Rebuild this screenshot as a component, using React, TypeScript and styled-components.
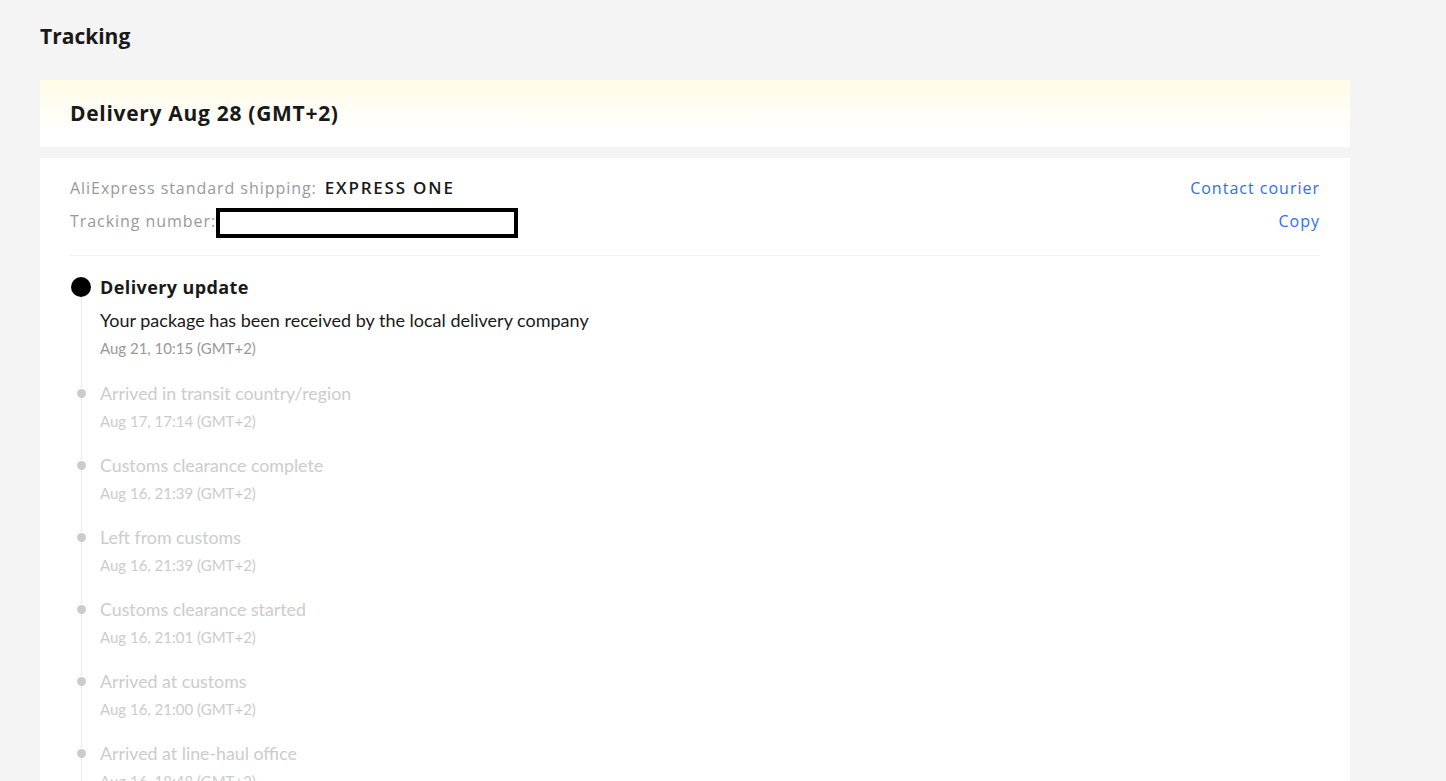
import { createGlobalStyle, styled } from "styled-components";

type TrackEvent = {
  title: string;
  detail?: string;
  time: string;
};

const events: TrackEvent[] = [
  {
    title: "Delivery update",
    detail: "Your package has been received by the local delivery company",
    time: "Aug 21, 10:15 (GMT+2)",
  },
  { title: "Arrived in transit country/region", time: "Aug 17, 17:14 (GMT+2)" },
  { title: "Customs clearance complete", time: "Aug 16, 21:39 (GMT+2)" },
  { title: "Left from customs", time: "Aug 16, 21:39 (GMT+2)" },
  { title: "Customs clearance started", time: "Aug 16, 21:01 (GMT+2)" },
  { title: "Arrived at customs", time: "Aug 16, 21:00 (GMT+2)" },
  { title: "Arrived at line-haul office", time: "Aug 16, 18:48 (GMT+2)" },
  { title: "Left from departure country/region", time: "Aug 16, 14:22 (GMT+2)" },
];

export default function App() {
  return (
    <>
      <GlobalStyle />
      <Page>
        <PageTitle>Tracking</PageTitle>
        <EtaCard>
          <EtaText>Delivery Aug 28 (GMT+2)</EtaText>
        </EtaCard>
        <DetailCard>
          <InfoRow>
            <InfoLabel>
              AliExpress standard shipping: <Carrier>EXPRESS ONE</Carrier>
            </InfoLabel>
            <LinkText>Contact courier</LinkText>
          </InfoRow>
          <InfoRow>
            <InfoLabel>
              Tracking number:
              <Redacted />
            </InfoLabel>
            <LinkText>Copy</LinkText>
          </InfoRow>
          <Divider />
          <Timeline>
            {events.map((ev, i) => (
              <Step key={i} $active={i === 0}>
                <Dot $active={i === 0} />
                <StepTitle $active={i === 0}>{ev.title}</StepTitle>
                {ev.detail && <StepDetail>{ev.detail}</StepDetail>}
                <StepTime $active={i === 0}>{ev.time}</StepTime>
              </Step>
            ))}
          </Timeline>
        </DetailCard>
      </Page>
    </>
  );
}

const GlobalStyle = createGlobalStyle`
  html, body {
    margin: 0;
    padding: 0;
    background: #f4f4f4;
    font-family: "Open Sans", Arial, sans-serif;
    overflow: hidden;
  }
`;

const Page = styled.div`
  width: 1310px;
  padding: 22px 0 0 40px;
`;

const PageTitle = styled.h1`
  margin: 0 0 30px;
  height: 28px;
  line-height: 28px;
  font-size: 21px;
  font-weight: 700;
  color: #191919;
`;

const EtaCard = styled.div`
  height: 67px;
  display: flex;
  align-items: center;
  padding: 0 30px;
  background: linear-gradient(180deg, #fffbe5 0%, #ffffff 75%);
  margin-bottom: 11px;
`;

const EtaText = styled.div`
  font-size: 21px;
  font-weight: 700;
  color: #191919;
  letter-spacing: 0.7px;
  margin-top: -2px;
`;

const DetailCard = styled.div`
  background: #fff;
  padding: 13px 30px 0;
  min-height: 700px;
`;

const InfoRow = styled.div`
  display: flex;
  justify-content: space-between;
  align-items: center;
  height: 33px;
`;

const InfoLabel = styled.div`
  display: flex;
  align-items: center;
  font-size: 16px;
  color: #999;
  letter-spacing: 0.95px;
`;

const Carrier = styled.span`
  margin-left: 8px;
  font-size: 17px;
  color: #191919;
  font-weight: 600;
  letter-spacing: 1.8px;
`;

const Redacted = styled.span`
  display: inline-block;
  width: 294px;
  height: 22px;
  border: 4px solid #000;
  background: #fff;
  margin-top: 4px;
`;

const LinkText = styled.span`
  font-size: 16px;
  color: #2e6ef2;
  letter-spacing: 1px;
  cursor: pointer;
`;

const Divider = styled.div`
  height: 1px;
  background: #f0f0f0;
  margin: 18px 0 18px;
`;

const Timeline = styled.div`
  display: flex;
  flex-direction: column;
  font-family: Lato, "Open Sans", sans-serif;
`;

const Step = styled.div<{ $active?: boolean }>`
  position: relative;
  padding: 0 0 ${(p) => (p.$active ? "22px" : "21px")} 30px;

  &::before {
    content: "";
    position: absolute;
    left: 11px;
    top: ${(p) => (p.$active ? "20px" : "16px")};
    bottom: -8px;
    width: 1px;
    background: #e8e8e8;
  }
`;

const Dot = styled.span<{ $active?: boolean }>`
  position: absolute;
  left: ${(p) => (p.$active ? "1px" : "7px")};
  top: ${(p) => (p.$active ? "3px" : "9px")};
  width: ${(p) => (p.$active ? "20px" : "9px")};
  height: ${(p) => (p.$active ? "20px" : "9px")};
  border-radius: 50%;
  background: ${(p) => (p.$active ? "#000" : "#ccc")};
`;

const StepTitle = styled.div<{ $active?: boolean }>`
  font-family: ${(p) => (p.$active ? `"Open Sans", sans-serif` : "inherit")};
  font-size: ${(p) => (p.$active ? "18px" : "17.8px")};
  font-weight: ${(p) => (p.$active ? 700 : 400)};
  letter-spacing: ${(p) => (p.$active ? "0.4px" : "0")};
  color: ${(p) => (p.$active ? "#191919" : "#ccc")};
  line-height: 26px;
`;

const StepDetail = styled.div`
  font-size: 18px;
  color: #191919;
  line-height: 26px;
  margin-top: 7px;
`;

const StepTime = styled.div<{ $active?: boolean }>`
  font-size: 15px;
  color: ${(p) => (p.$active ? "#999" : "#ccc")};
  line-height: 20px;
  margin-top: 5px;
`;
